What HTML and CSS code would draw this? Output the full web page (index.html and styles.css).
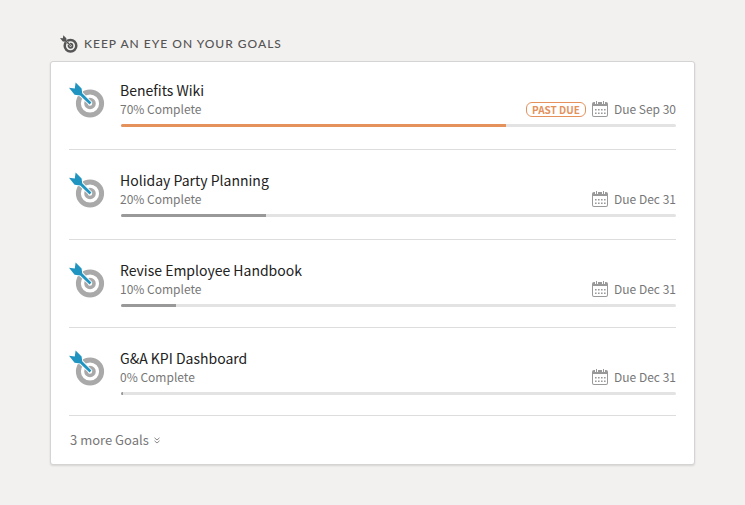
FILE: index.html
```html
<!DOCTYPE html>
<html lang="en">
<head>
	<meta charset="utf-8">
	<meta name="viewport" content="width=device-width, initial-scale=1">
	<title>Goals</title>
	<link rel="stylesheet" href="styles.css">
</head>
<body>
	<!-- shared icons -->
	<svg class="sprite" aria-hidden="true">
		<symbol id="target" viewBox="0 0 36 38">
			<circle class="ring" cx="21" cy="21.5" r="11.6" stroke-width="5"/>
			<circle class="ring" cx="21" cy="21.5" r="4" stroke-width="3.6"/>
			<path class="halo" d="M0 7L5 7.5L6.5 1L12.5 6.4L13 11L22 20.4L20.4 22L11 13.2L6 12.8Z"/>
			<path class="dart" d="M0 5.8L5.8 6.6L6.6 0.5L12.6 6.4L13.2 11.2L22.4 20.6L20.6 22.4L11.2 13.4L5.6 12.8Z"/>
		</symbol>
		<symbol id="calendar" viewBox="0 0 16 16">
			<path fill="#999" fill-rule="evenodd" d="M2 1H14A2 2 0 0 1 16 3V14A2 2 0 0 1 14 16H2A2 2 0 0 1 0 14V3A2 2 0 0 1 2 1ZM1 5V14A1 1 0 0 0 2 15H14A1 1 0 0 0 15 14V5Z"/>
			<path fill="#fff" d="M3 0H6V3H3ZM10 0H13V3H10Z"/>
			<path fill="#999" d="M4 0H5V3H4ZM11 0H12V3H11Z"/>
			<path fill="#999" d="M3 8H4.6V9.6H3ZM6 8H7.6V9.6H6ZM9 8H10.6V9.6H9ZM12 8H13.6V9.6H12ZM3 11.4H4.6V13H3ZM6 11.4H7.6V13H6ZM9 11.4H10.6V13H9ZM12 11.4H13.6V13H12Z"/>
		</symbol>
	</svg>

	<h1 class="heading">
		<svg class="heading-icon" aria-hidden="true"><use href="#target"/></svg>
		KEEP AN EYE ON YOUR GOALS
	</h1>

	<div class="card">
		<ul class="goals">
			<li class="goal late">
				<svg class="goal-icon" aria-hidden="true"><use href="#target"/></svg>
				<div class="goal-body">
					<h2>Benefits Wiki</h2>
					<div class="info">
						<span>70% Complete</span>
						<span class="due"><span class="badge">PAST DUE</span><svg class="calendar" aria-hidden="true"><use href="#calendar"/></svg>Due Sep 30</span>
					</div>
					<div class="bar"><div class="fill" style="width: 69.4%"></div></div>
				</div>
			</li>
			<li class="goal">
				<svg class="goal-icon" aria-hidden="true"><use href="#target"/></svg>
				<div class="goal-body">
					<h2>Holiday Party Planning</h2>
					<div class="info">
						<span>20% Complete</span>
						<span class="due"><svg class="calendar" aria-hidden="true"><use href="#calendar"/></svg>Due Dec 31</span>
					</div>
					<div class="bar"><div class="fill" style="width: 26.2%"></div></div>
				</div>
			</li>
			<li class="goal">
				<svg class="goal-icon" aria-hidden="true"><use href="#target"/></svg>
				<div class="goal-body">
					<h2>Revise Employee Handbook</h2>
					<div class="info">
						<span>10% Complete</span>
						<span class="due"><svg class="calendar" aria-hidden="true"><use href="#calendar"/></svg>Due Dec 31</span>
					</div>
					<div class="bar"><div class="fill" style="width: 9.9%"></div></div>
				</div>
			</li>
			<li class="goal">
				<svg class="goal-icon" aria-hidden="true"><use href="#target"/></svg>
				<div class="goal-body">
					<h2>G&amp;A KPI Dashboard</h2>
					<div class="info">
						<span>0% Complete</span>
						<span class="due"><svg class="calendar" aria-hidden="true"><use href="#calendar"/></svg>Due Dec 31</span>
					</div>
					<div class="bar"><div class="fill" style="width: 0%"></div></div>
				</div>
			</li>
		</ul>
		<button class="more" type="button">
			3 more Goals
			<svg class="chevrons" viewBox="0 0 6 7" aria-hidden="true"><path d="M0.5 0.8L3 3L5.5 0.8M0.5 3.8L3 6L5.5 3.8"/></svg>
		</button>
	</div>
</body>
</html>
```

FILE: styles.css
```css
body {
    margin: 0;
    padding: 34px 50px;
    background-color: #f3f1ef;
    color: #777;
    font-family: "Noto Sans CJK SC", "Noto Sans", sans-serif;
    font-size: 12px;
    line-height: 18px;
}
h1, h2, ul {
    margin: 0;
    padding: 0;
    font-weight: normal;
}
.sprite {
    position: absolute;
    width: 0;
    height: 0;
}
.ring {
    fill: none;
    stroke: var(--ring);
}
.halo {
    fill: var(--page);
    stroke: var(--page);
    stroke-width: 2;
}
.dart {
    fill: var(--dart);
}
.heading {
    display: flex;
    align-items: center;
    gap: 6px;
    padding: 0 10px 7px;
    color: #555;
    font-family: Lato, sans-serif;
    font-size: 12px;
    font-weight: 500;
    line-height: 20px;
    letter-spacing: 1px;
}
.heading-icon {
    --ring: #555;
    --dart: #555;
    --page: #f3f1ef;
    width: 18px;
    height: 19px;
}
.card {
    padding: 0 18px;
    background-color: #fff;
    border: 1px solid #d4d4d4;
    border-radius: 3px;
    box-shadow: 0 1px 2px rgba(0, 0, 0, 0.12);
}
.goals {
    list-style: none;
}
.goal {
    display: flex;
    gap: 15px;
    padding: 20px 0 22px;
    border-bottom: 1px solid #ddd;
}
.goal:first-child {
    padding-top: 18px;
}
.goal:nth-child(n+3) {
    padding-bottom: 20px;
}
.goal-icon {
    --ring: #a9a9a9;
    --dart: #1f94c1;
    --page: #fff;
    flex: none;
    width: 36px;
    height: 38px;
    margin-top: 2px;
}
.goal-body {
    flex: 1;
}
.goal h2 {
    color: #222;
    font-size: 14px;
    line-height: 20px;
}
.info {
    display: flex;
    justify-content: space-between;
    margin-bottom: 6px;
}
.due {
    display: flex;
    align-items: center;
    gap: 6px;
}
.calendar {
    width: 16px;
    height: 16px;
}
.badge {
    padding: 0 5px;
    border: 1px solid #e4915c;
    border-radius: 6px;
    color: #e4915c;
    font-size: 10px;
    font-weight: bold;
    line-height: 13px;
}
.bar {
    height: 3px;
    margin-left: 1px;
    background-color: #e3e3e3;
    border-radius: 2px;
    overflow: hidden;
}
.fill {
    min-width: 2px;
    height: 3px;
    background-color: #999;
}
.late .fill {
    background-color: #e4915c;
}
.more {
    display: flex;
    align-items: center;
    gap: 5px;
    padding: 15px 1px;
    border: 0;
    background: none;
    color: #777;
    font-family: inherit;
    font-size: 13px;
    line-height: 18px;
    cursor: pointer;
}
.chevrons {
    width: 6px;
    height: 7px;
    fill: none;
    stroke: #888;
}
```
